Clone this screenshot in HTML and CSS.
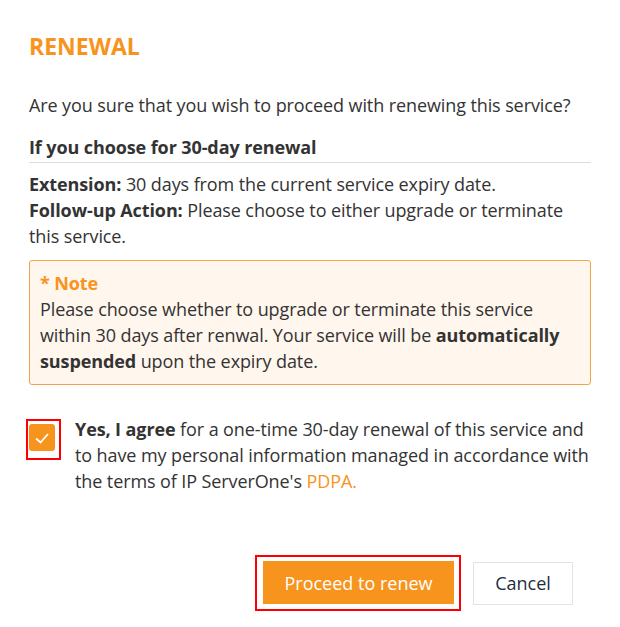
FILE: index.html
```html
<!DOCTYPE html>
<html lang="en">
<head>
    <meta charset="UTF-8">
    <meta name="viewport" content="width=device-width, initial-scale=1.0">
    <title>Renewal</title>
    <link rel="stylesheet" href="styles.css">
</head>
<body>
    <div class="modal">
        <h2 class="title">RENEWAL</h2>

        <p class="question">Are you sure that you wish to proceed with renewing this service?</p>

        <h4 class="subhead">If you choose for 30-day renewal</h4>

        <div class="details">
            <strong>Extension:</strong> 30 days from the current service expiry date.<br>
            <strong>Follow-up Action:</strong> Please choose to either upgrade or terminate this service.
        </div>

        <div class="note">
            <div class="note-title">* Note</div>
            Please choose whether to upgrade or terminate this service within 30 days after renwal. Your service will be <strong>automatically suspended</strong> upon the expiry date.
        </div>

        <label class="agree">
            <span class="check-wrap">
                <span class="checkbox">
                    <svg width="18" height="14" viewBox="0 0 18 14">
                        <path d="M3 7.5 L7.5 11.5 L15 3" fill="none" stroke="#fff" stroke-width="1.8"/>
                    </svg>
                </span>
            </span>
            <span class="agree-text">
                <strong>Yes, I agree</strong> for a one-time 30-day renewal of this service and to have my personal information managed in accordance with the terms of IP ServerOne's <a href="#">PDPA.</a>
            </span>
        </label>

        <div class="actions">
            <span class="highlight">
                <button class="button primary">Proceed to renew</button>
            </span>
            <button class="button cancel">Cancel</button>
        </div>
    </div>
</body>
</html>
```

FILE: styles.css
```css
* {
    margin: 0;
    padding: 0;
    box-sizing: border-box;
}

body {
    font-family: 'Open Sans', sans-serif;
    font-size: 18px;
    line-height: 26px;
    letter-spacing: -0.1px;
    color: #333;
    background: #fff;
}

.modal {
    width: 620px;
    padding: 31px 29px 0;
}

.title {
    font-size: 23px;
    line-height: 30px;
    font-weight: 700;
    letter-spacing: 0;
    color: #f7941d;
    margin-bottom: 31px;
}

.question {
    margin-bottom: 16px;
}

.subhead {
    font-size: 18px;
    font-weight: 700;
    padding-bottom: 2px;
    border-bottom: 1px solid #ddd;
    margin-bottom: 8px;
}

.details {
    margin-bottom: 11px;
}

.note {
    background: #fff6ed;
    border: 1px solid #f2a44a;
    border-radius: 3px;
    padding: 9px 10px 10px;
}

.note-title {
    color: #f7941d;
    font-weight: 700;
}

.agree {
    display: flex;
    align-items: flex-start;
    margin-top: 31px;
    cursor: pointer;
}

.check-wrap {
    flex: none;
    width: 35px;
    height: 41px;
    margin: 3px 14px 0 -3px;
    border: 2px solid #f00;
    padding: 3px 0 0 1px;
}

.checkbox {
    display: flex;
    align-items: center;
    justify-content: center;
    width: 26px;
    height: 27px;
    background: #f7941d;
    border-radius: 3px;
}

.agree a {
    color: #f7941d;
    text-decoration: none;
}

.actions {
    display: flex;
    justify-content: flex-end;
    align-items: center;
    gap: 12px;
    margin-top: 61px;
    padding-right: 18px;
}

.highlight {
    border: 2px solid #f00;
    padding: 4px 5px 5px 6px;
}

.button {
    font-family: 'Open Sans', sans-serif;
    font-size: 18px;
    letter-spacing: 0;
    height: 43px;
    border: none;
    cursor: pointer;
}

.primary {
    display: block;
    width: 191px;
    background: #f7941d;
    color: #fff;
}

.cancel {
    width: 100px;
    background: #fff;
    color: #1f2d3d;
    border: 1px solid #e3e3e3;
}
```
